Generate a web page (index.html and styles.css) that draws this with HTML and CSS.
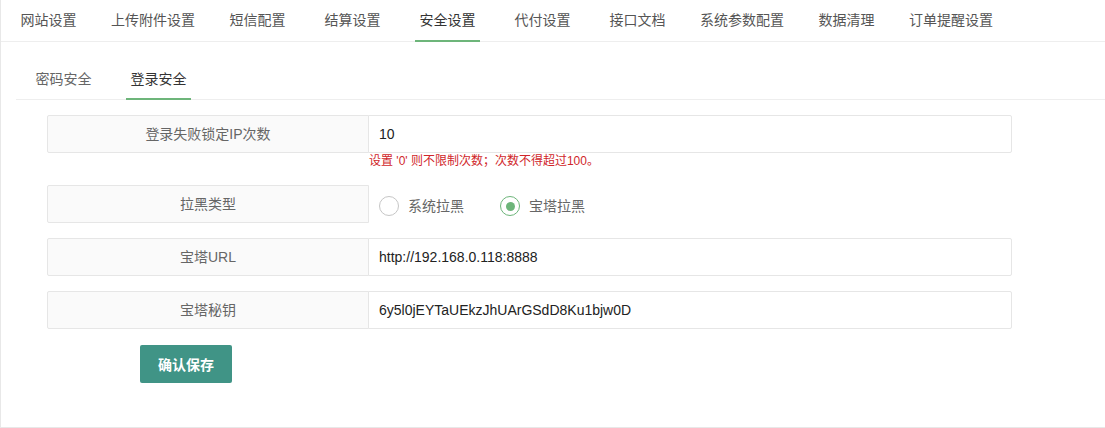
FILE: index.html
```html
<!DOCTYPE html>
<html lang="zh-CN">
<head>
<meta charset="utf-8">
<title>安全设置</title>
<link rel="stylesheet" href="styles.css">
</head>
<body>
<div class="panel">
  <ul class="tabs main-tabs">
    <li><span>网站设置</span></li>
    <li><span>上传附件设置</span></li>
    <li><span>短信配置</span></li>
    <li><span>结算设置</span></li>
    <li class="active"><span>安全设置</span></li>
    <li><span>代付设置</span></li>
    <li><span>接口文档</span></li>
    <li><span>系统参数配置</span></li>
    <li><span>数据清理</span></li>
    <li><span>订单提醒设置</span></li>
  </ul>
  <div class="panel-body">
    <ul class="tabs sub-tabs">
      <li><span>密码安全</span></li>
      <li class="active"><span>登录安全</span></li>
    </ul>
    <form class="form">
      <div class="row">
        <label class="lbl">登录失败锁定IP次数</label>
        <div class="field"><input class="inp" type="text" value="10"></div>
      </div>
      <div class="hint">设置 '0' 则不限制次数；次数不得超过100。</div>
      <div class="row gap">
        <label class="lbl">拉黑类型</label>
        <div class="radios">
          <span class="radio"><i class="dot"></i>系统拉黑</span>
          <span class="radio checked"><i class="dot"></i>宝塔拉黑</span>
        </div>
      </div>
      <div class="row gap">
        <label class="lbl">宝塔URL</label>
        <div class="field"><input class="inp" type="text" value="http://192.168.0.118:8888"></div>
      </div>
      <div class="row gap">
        <label class="lbl">宝塔秘钥</label>
        <div class="field"><input class="inp" type="text" value="6y5l0jEYTaUEkzJhUArGSdD8Ku1bjw0D"></div>
      </div>
      <div class="actions">
        <button class="btn" type="button">确认保存</button>
      </div>
    </form>
  </div>
</div>
</body>
</html>
```
FILE: styles.css
```css
* { box-sizing: border-box; }
html, body { margin: 0; padding: 0; background: #fff; }
body {
  font-family: "Liberation Sans", "Noto Sans CJK SC", sans-serif;
  font-size: 14px;
  color: #333;
}
.panel {
  height: 428px;
  border-left: 1px solid #e8e8e8;
  border-bottom: 1px solid #e8e8e8;
  overflow: hidden;
}
.tabs {
  list-style: none;
  margin: 0;
  padding: 0;
  display: flex;
  border-bottom: 1px solid #eeeeee;
}
.tabs li {
  padding: 0 15px;
  flex: 0 0 auto;
}
.tabs li span {
  display: block;
  position: relative;
  min-width: 65px;
  text-align: center;
  white-space: nowrap;
}
.tabs li.active span::after {
  content: "";
  position: absolute;
  left: 0;
  right: 0;
  bottom: -1px;
  height: 2px;
  background: #6db57a;
}
.main-tabs { height: 42px; }
.main-tabs li span { line-height: 41px; height: 41px; color: #555; }
.main-tabs li.active span { color: #333; }
.panel-body { padding: 17px 0 0 15px; }
.sub-tabs { height: 41px; }
.sub-tabs li span { line-height: 40px; height: 40px; color: #666; }
.sub-tabs li.active span { color: #333; }
.form {
  width: 965px;
  margin: 15px 0 0 31px;
}
.row { display: flex; align-items: flex-start; }
.row.gap { margin-top: 15px; }
.lbl {
  flex: 0 0 322px;
  height: 38px;
  line-height: 36px;
  border: 1px solid #e6e6e6;
  border-radius: 2px 0 0 2px;
  background: #fafafa;
  color: #666;
  text-align: center;
}
.field { flex: 1; margin-left: -1px; }
.inp {
  display: block;
  width: 100%;
  height: 38px;
  border: 1px solid #e6e6e6;
  border-radius: 0 2px 2px 0;
  padding: 0 10px;
  font-family: inherit;
  font-size: 14px;
  color: #222;
  background: #fff;
  outline: none;
}
.hint {
  margin-left: 322px;
  line-height: 17px;
  font-size: 12px;
  color: #d0262a;
}
.radios {
  display: flex;
  align-items: center;
  padding-left: 10px;
  margin-top: 7px;
  line-height: 28px;
  color: #666;
}
.radio {
  display: inline-flex;
  align-items: center;
  margin-right: 36px;
}
.dot {
  display: inline-block;
  width: 20px;
  height: 20px;
  border: 1px solid #c6c6c6;
  border-radius: 50%;
  margin-right: 9px;
  position: relative;
}
.radio.checked .dot { border-color: #6db57a; }
.radio.checked .dot::after {
  content: "";
  position: absolute;
  left: 4.5px;
  top: 4.5px;
  width: 9px;
  height: 9px;
  border-radius: 50%;
  background: #6db57a;
}
.actions { margin-top: 16px; padding-left: 93px; }
.btn {
  height: 38px;
  width: 92px;
  border: none;
  border-radius: 2px;
  background: #409486;
  color: #fff;
  font-family: inherit;
  font-size: 14px;
  font-weight: 600;
  padding: 0;
}
```
